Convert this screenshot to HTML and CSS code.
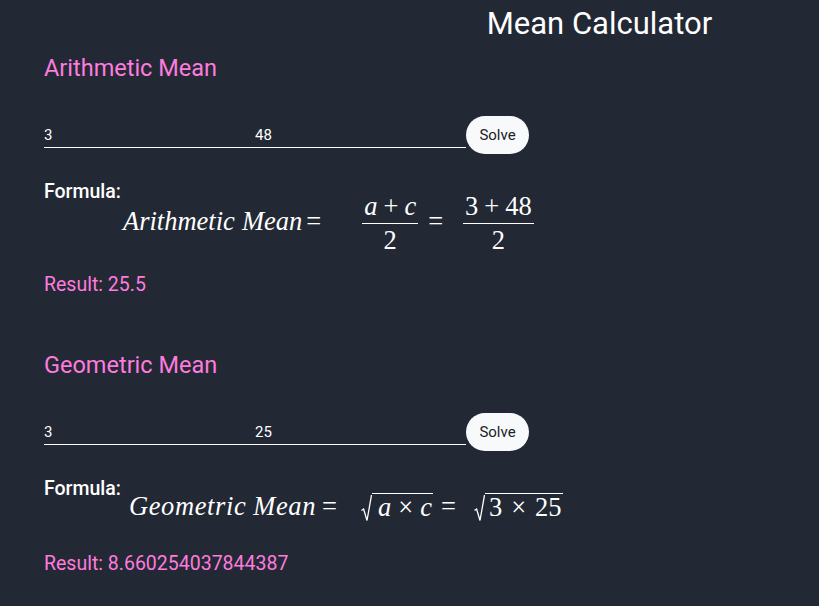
FILE: index.html
```html
<!DOCTYPE html>
<html lang="en">
<head>
<meta charset="utf-8">
<title>Mean Calculator</title>
<link rel="stylesheet" href="styles.css">
</head>
<body>
<header class="top">
  <h1 class="title">Mean Calculator</h1>
</header>

<section class="calc calc-arith">
  <h2 class="calc-title">Arithmetic Mean</h2>
  <div class="row">
    <input class="num" type="text" value="3">
    <input class="num" type="text" value="48">
    <button class="solve" type="button">Solve</button>
  </div>
  <div class="formula-label">Formula:</div>
  <div class="math math-arith">
    <span class="mi">Arithmetic</span><span class="mi gap">Mean</span><span class="mo mo-a1">=</span><span class="frac"><span class="fnum"><i>a</i><span class="bin">+</span><i>c</i></span><span class="fden">2</span></span><span class="mo mo-a2">=</span><span class="frac"><span class="fnum">3<span class="bin">+</span>48</span><span class="fden">2</span></span>
  </div>
  <p class="result">Result: 25.5</p>
</section>

<section class="calc calc-geo">
  <h2 class="calc-title">Geometric Mean</h2>
  <div class="row">
    <input class="num" type="text" value="3">
    <input class="num" type="text" value="25">
    <button class="solve" type="button">Solve</button>
  </div>
  <div class="formula-label">Formula:</div>
  <div class="math math-geo">
    <span class="mi">Geometric</span><span class="mi gap">Mean</span><span class="mo mo-g1">=</span><span class="sqrt"><svg class="rad" width="11" height="27" viewBox="0 0 11 27"><path d="M0.5 15.5 L2.6 14 L6 25.5 L10.4 0.7 L11 0.7" fill="none" stroke="#ffffff" stroke-width="1.3"/></svg><span class="under under-var"><i>a</i><span class="bin">×</span><i>c</i></span></span><span class="mo mo-g2">=</span><span class="sqrt"><svg class="rad" width="11" height="27" viewBox="0 0 11 27"><path d="M0.5 15.5 L2.6 14 L6 25.5 L10.4 0.7 L11 0.7" fill="none" stroke="#ffffff" stroke-width="1.3"/></svg><span class="under under-num">3<span class="bin">×</span>25</span></span>
  </div>
  <p class="result">Result: 8.660254037844387</p>
</section>
</body>
</html>
```

FILE: styles.css
```css
html, body {
  margin: 0;
  padding: 0;
  background: #222834;
  color: #ffffff;
  font-family: Roboto, "Liberation Sans", sans-serif;
}

body {
  width: 819px;
  height: 606px;
  overflow: hidden;
}

.top {
  padding-left: 380px;
  text-align: center;
}

.title {
  margin: 0;
  padding-top: 5px;
  font-size: 31px;
  font-weight: 400;
  line-height: 38px;
}

.calc {
  padding-left: 44px;
}

.calc-title {
  margin: 10px 0 0;
  font-size: 23.5px;
  font-weight: 400;
  line-height: 30px;
  color: #fd7cdd;
}

.calc-geo .calc-title {
  margin-top: 54px;
}

.row {
  display: flex;
  align-items: flex-end;
  margin-top: 33px;
}

.num {
  width: 211px;
  box-sizing: border-box;
  height: 27px;
  padding: 1px 0 0;
  margin: 0;
  border: 0;
  border-bottom: 1px solid #ffffff;
  background: transparent;
  color: #ffffff;
  font-family: inherit;
  font-size: 15px;
  outline: none;
}

.solve {
  width: 63px;
  height: 38px;
  margin: 0 0 -6px;
  border: 0;
  border-radius: 19px;
  background: #f8f9fa;
  color: #202124;
  font-family: inherit;
  font-size: 15px;
  padding: 0;
}

.formula-label {
  margin-top: 34px;
  font-size: 19.5px;
  font-weight: 500;
  line-height: 20px;
}

.math {
  font-family: "Liberation Serif", "DejaVu Serif", serif;
  font-size: 26.5px;
  display: flex;
  align-items: center;
  height: 56px;
  margin-top: -9px;
}

.math-arith {
  padding-left: 79px;
}

.math-geo {
  padding-left: 85px;
  height: 40px;
  margin-top: -13px;
}

.mi {
  font-style: italic;
}

.math-geo .mi {
  letter-spacing: 0.6px;
}

.gap {
  margin-left: 7px;
}

.mo {
  display: inline-block;
}

.mo-a1 {
  margin: 0 41px 0 4px;
}

.mo-a2 {
  margin: 0 20px 0 10px;
}

.mo-g1 {
  margin: 0 24px 0 6px;
}

.mo-g2 {
  margin: 0 18px 0 8px;
}

.bin {
  margin: 0 6px;
}

.frac {
  display: inline-flex;
  flex-direction: column;
  align-items: center;
  line-height: 26px;
  margin-top: 4px;
}

.fnum {
  padding: 0 2px 4px;
  border-bottom: 1px solid #ffffff;
}

.fden {
  padding-top: 3px;
}

.sqrt {
  display: inline-flex;
  align-items: flex-end;
}

.rad {
  display: block;
  margin-bottom: -3px;
}

.under {
  border-top: 1.3px solid #ffffff;
  line-height: 24px;
  padding: 1px 1px 0 0;
}

.under-var {
  padding-left: 6px;
}

.under-var .bin {
  margin: 0 7px;
}

.under-num {
  padding-left: 4px;
}

.under-num .bin {
  margin: 0 9px;
}

.result {
  margin: 25px 0 0;
  font-size: 19.5px;
  line-height: 22px;
  color: #fd7cdd;
}

.calc-geo .result {
  margin-top: 27px;
}
```
